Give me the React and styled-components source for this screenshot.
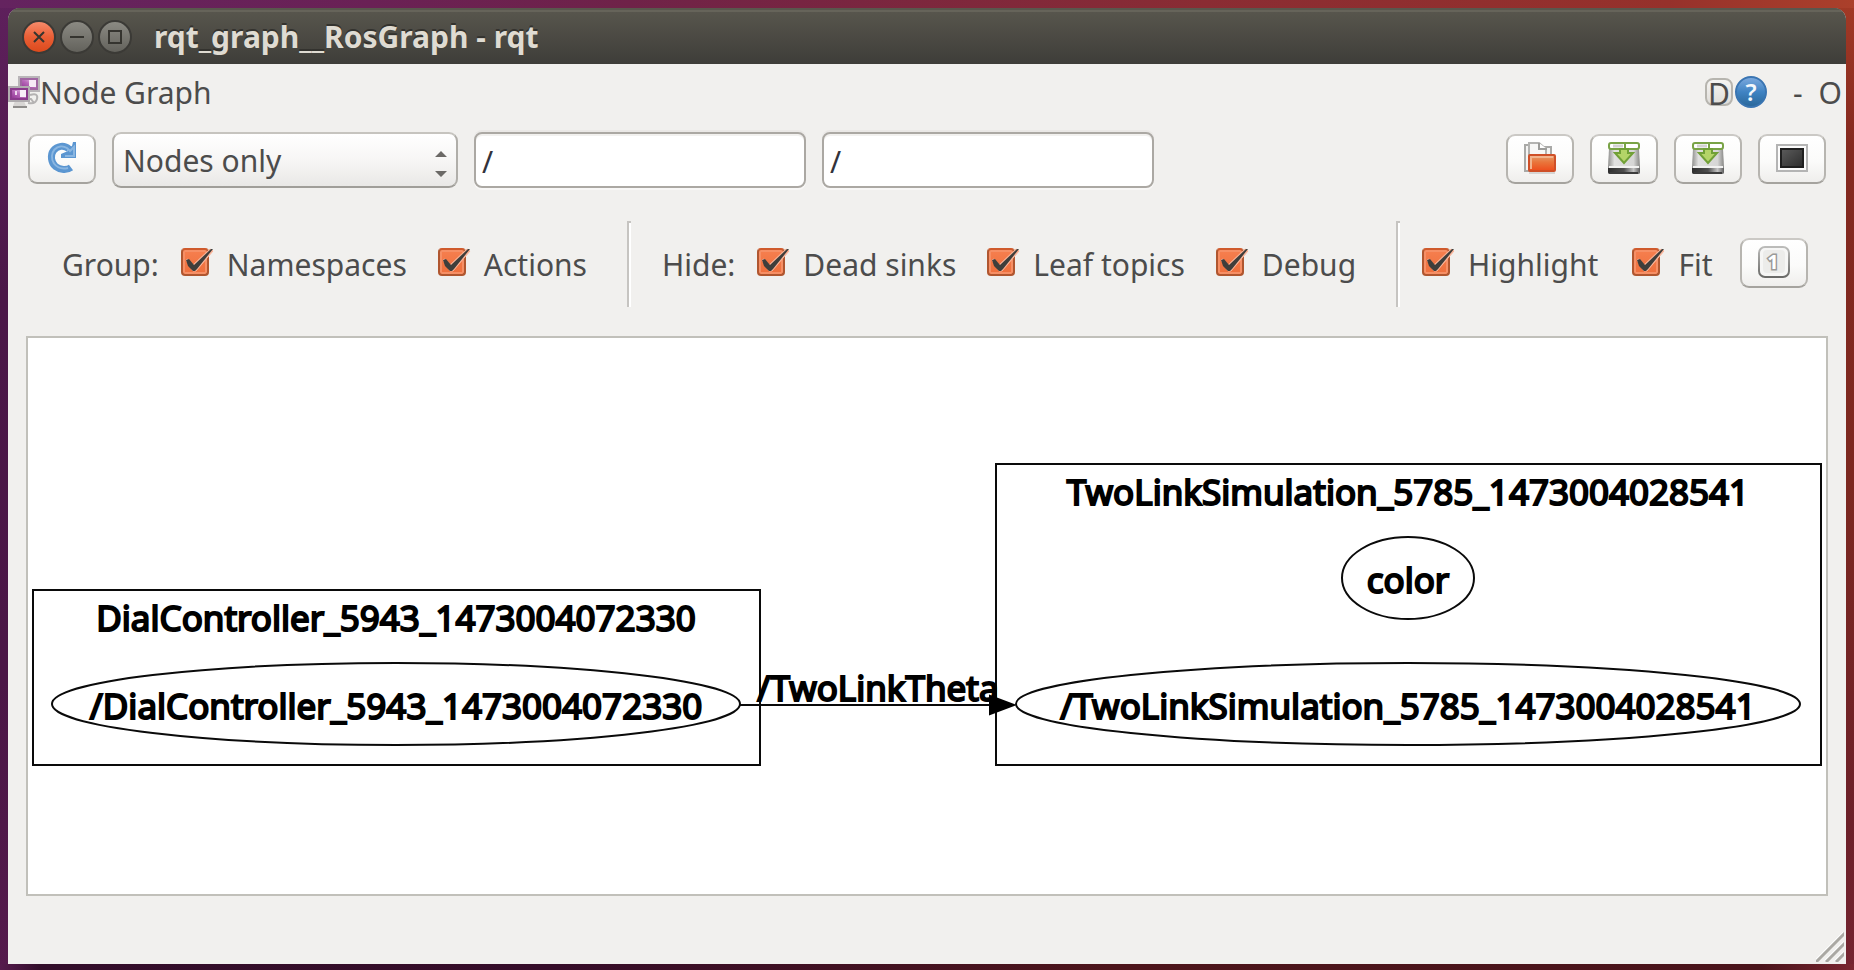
import React, { useState } from "react";
import styled, { createGlobalStyle } from "styled-components";

const GlobalStyle = createGlobalStyle`
  *, *::before, *::after { box-sizing: border-box; }
  body { margin: 0; }
  body, button, input, select {
    font-family: "Noto Sans", "Open Sans", sans-serif;
    font-size: 30px;
    line-height: 40px;
    color: #4c4c4c;
  }
`;

/* ---------- desktop and window frame ---------- */

const Desktop = styled.div`
  display: flex;
  min-height: 100vh;
  padding: 8px 8px 6px;
  background:
    linear-gradient(90deg, #561c4e, #330e2a 40px, #360d29 30%, #4d151b 60%, #4a141b 95%, #7a2630) bottom / 100% 6px no-repeat,
    linear-gradient(90deg, #64235f, #6a2155 20%, #6f2248 34%, #8a2c33 65%, #96312b 90%, #ab402b) top / 100% 8px no-repeat,
    linear-gradient(#5e205c, #4b1748 30%, #4b1646 70%, #551a4c) left / 50% 100% no-repeat,
    linear-gradient(#a33a26, #84291f 15%, #7c2820 50%, #6c2029 85%, #742430) right / 50% 100% no-repeat;
`;

const Window = styled.div`
  display: flex;
  flex: 1;
  flex-direction: column;
  min-width: 0;
  overflow: hidden;
  border-radius: 12px 12px 0 0;
  background: #f1f0ee;
`;

const TitleBar = styled.header`
  display: flex;
  align-items: center;
  gap: 4px;
  height: 56px;
  padding: 2px 14px 0;
  background: linear-gradient(#59574e, #3e3d39);
  box-shadow: inset 0 2px 0 #59574d, inset 0 4px 0 #66645a;
`;

const FrameButton = styled.button`
  display: grid;
  place-items: center;
  width: 34px;
  height: 34px;
  padding: 0;
  border: 2px solid #3b3a36;
  border-radius: 50%;
  background: ${(p) =>
    p.$close ? "linear-gradient(#f58a6a, #ea5f36 50%, #dc4a1c)" : "linear-gradient(#8b8a83, #63625c)"};
`;

const WindowTitle = styled.h1`
  margin: 0 0 0 18px;
  color: #dfdbd2;
  font-size: 30px;
  font-weight: 700;
  line-height: 40px;
  text-shadow: 0 -2px 0 #33322e;
`;

/* ---------- dock title ---------- */

const DockBar = styled.div`
  display: flex;
  align-items: center;
  height: 56px;
  padding-right: 2px;
`;

const DockTitle = styled.h2`
  flex: 1;
  margin: 0;
  padding-top: 2px;
  font-size: 30px;
  font-weight: 400;
  line-height: 40px;
`;

const KeyButton = styled.button`
  display: grid;
  place-items: center;
  width: 28px;
  height: 28px;
  margin-right: 2px;
  padding: 2px 0 0;
  border: 2px solid #b7b5af;
  border-radius: 8px;
  background: linear-gradient(#f6f5f3, #dfddd9);
  line-height: 24px;
`;

const HelpButton = styled.button`
  display: grid;
  margin-right: 24px;
  padding: 0;
  border: 0;
  background: none;
`;

const FlatButton = styled.button`
  padding: 2px 2px 0;
  border: 0;
  background: none;

  & + & { margin-left: 12px; }
`;

/* ---------- tool bars ---------- */

const Main = styled.main`
  display: flex;
  flex: 1;
  flex-direction: column;
  padding: 12px 18px 0;
`;

const Toolbar = styled.div`
  display: flex;
  align-items: center;
  gap: 16px;
  padding: 0 2px;
`;

const ToolButton = styled.button`
  display: grid;
  flex: none;
  place-items: center;
  width: 68px;
  height: 50px;
  margin: 0 0 2px;
  padding: 0 0 2px;
  border: 2px solid;
  border-color: #cbc9c5 #b7b5b0 #a5a39e;
  border-radius: 9px;
  background: linear-gradient(#ffffff, #fbfbfa 55%, #efeeec);
`;

const Combo = styled.div`
  position: relative;
  flex: 0 1 346px;
`;

const ComboSelect = styled.select`
  width: 100%;
  height: 56px;
  padding: 2px 40px 0 9px;
  appearance: none;
  border: 2px solid;
  border-color: #c6c4bf #b0aea9 #a09e99;
  border-radius: 9px;
  background: linear-gradient(#ffffff, #f7f6f5 50%, #e9e8e6);
`;

const ComboArrows = styled.svg`
  position: absolute;
  top: 19px;
  right: 10px;
  pointer-events: none;
`;

const Field = styled.input`
  flex: 0 1 332px;
  min-width: 0;
  height: 56px;
  padding: 2px 6px 0;
  border: 2px solid #aba8a3;
  border-radius: 8px;
  background: #ffffff;
  box-shadow: 0 2px 0 #f8f7f6, 0 -2px 0 #eae8e6, inset 0 2px 0 #f2f1ef;
  color: #33333b;
`;

const Spacer = styled.div`
  flex: 1;
`;

const Options = styled.div`
  display: flex;
  align-items: center;
  height: 86px;
  margin: 33px 0 29px;
  padding-left: 36px;
`;

const OptionGroup = styled.div`
  display: flex;
  align-items: center;
  gap: ${(p) => p.$gap || 31}px;
`;

const GroupName = styled.span`
  margin-right: 22px;
  padding-top: 2px;
`;

const Divider = styled.div`
  align-self: stretch;
  flex: none;
  width: 4px;
  margin: 0 ${(p) => p.$after}px 0 40px;
  border: 0 solid #c6c4c1;
  border-width: 2px 0 0 2px;
  background: #ffffff;
`;

const Option = styled.label`
  display: flex;
  align-items: center;
  gap: 12px;
  padding-top: 2px;
  white-space: nowrap;
`;

const TickBox = styled.span`
  display: grid;
  width: 34px;
  height: 32px;
  margin-bottom: 6px;

  & > * { grid-area: 1 / 1; }
`;

const TickInput = styled.input`
  width: 28px;
  height: 28px;
  margin: 2px 0 0;
  appearance: none;
  border: 2px solid #b0562f;
  border-top-color: #cf5a2c;
  border-radius: 4px;
  background: linear-gradient(#f67f4f, #ee6f3c);
  box-shadow: inset 0 0 0 2px #f68f65;

  &:not(:checked) {
    border-color: #b7b5b0;
    background: #ffffff;
    box-shadow: none;
  }
  &:not(:checked) + svg { visibility: hidden; }
`;

const Tick = styled.svg`
  pointer-events: none;
`;

const FitButtonSlot = styled.div`
  margin-left: 27px;
`;

/* ---------- graph view ---------- */

const GraphView = styled.section`
  display: grid;
  flex: 1;
  min-height: 240px;
  border: 2px solid #c1c0ba;
  background: #ffffff;
`;

const Graph = styled.svg`
  width: 100%;
  height: 100%;
  overflow: hidden;
`;

const Outline = styled.g`
  fill: none;
  stroke: #0a0a0a;
  stroke-width: 2px;
`;

const GraphLabel = styled.text`
  fill: #000000;
  stroke: #000000;
  stroke-width: 2px;
  font-size: 35px;
  text-anchor: middle;
`;

const StatusBar = styled.footer`
  display: flex;
  align-items: flex-end;
  justify-content: flex-end;
  height: 68px;
  padding: 0 2px 2px 0;
`;

/* ---------- icons ---------- */

const NodesIcon = () => (
  <svg width="32" height="34" viewBox="0 0 32 34" aria-hidden="true">
    <defs>
      <linearGradient id="screen" x1="0" y1="1" x2="1" y2="0">
        <stop offset="0" stopColor="#8d2f8f" />
        <stop offset="0.5" stopColor="#b869ba" />
        <stop offset="1" stopColor="#f3e2f3" />
      </linearGradient>
    </defs>
    <path d="M22 20c6-2 8 0 7 4s-4 5-9 4M15 24h8l3 4" fill="none" stroke="#b4b2b2" strokeWidth="2" />
    <path d="M7 26h9l2 5H5z" fill="#d8d6d4" />
    <path d="M5 32h14" stroke="#8f8d8b" strokeWidth="2" />
    <rect x="11" y="2" width="20" height="14" fill="#cfc0cf" stroke="#b9b5b8" strokeWidth="2" />
    <rect x="13" y="4" width="16" height="10" fill="url(#screen)" stroke="#a066a2" strokeWidth="2" />
    <rect x="21" y="5" width="7" height="7" fill="#f6e9f6" />
    <rect x="1" y="12" width="20" height="14" fill="#d4c6d4" stroke="#b0acaf" strokeWidth="2" />
    <rect x="3" y="14" width="16" height="10" fill="url(#screen)" stroke="#8a3b8c" strokeWidth="2" />
    <rect x="12" y="15" width="6" height="7" fill="#f8eef8" />
    <rect x="7" y="16" width="2" height="4" fill="#f0d8f0" />
  </svg>
);

const RefreshIcon = () => (
  <svg width="32" height="32" viewBox="0 0 32 32" aria-hidden="true">
    <path
      d="M25 25.500C21 28.500 14 28 9.500 24.500C5 20.500 4 13 7.500 8.500C11 4 18 2.500 23 7"
      fill="none"
      stroke="#5b96d1"
      strokeWidth="7"
    />
    <path d="M30 0v16H15v-4l7-3-1-3 5-2 1-4z" fill="#5b96d1" />
    <path
      d="M22 26C16 27.500 11 25.500 8 21.500C5 16.500 5.500 11 8.500 7.500C12 4 17 3.500 21 6l3 3 4-4v9h-9"
      fill="none"
      stroke="#8ab6e1"
      strokeWidth="2"
    />
  </svg>
);

const FolderIcon = () => (
  <svg width="32" height="32" viewBox="0 0 32 32" aria-hidden="true">
    <defs>
      <linearGradient id="folder" x1="0" y1="0" x2="0" y2="1">
        <stop offset="0" stopColor="#e5a070" />
        <stop offset="0.45" stopColor="#e9753b" />
        <stop offset="1" stopColor="#ee4c1c" />
      </linearGradient>
    </defs>
    <path d="M1 3h4v26H1zM17 5h10v9H17z" fill="#f4f4f3" stroke="#a9a9a7" strokeWidth="2" />
    <path d="M5 1h10l7 6v8H5z" fill="#f7f7f6" stroke="#b3b3b1" strokeWidth="2" />
    <path d="M15 1v6h8" fill="#ffffff" stroke="#9c9c9a" strokeWidth="2" />
    <rect x="5" y="13" width="26" height="16" rx="1" fill="url(#folder)" stroke="#cf5028" strokeWidth="2" />
    <path d="M7 27V15h22" fill="none" stroke="#f2b48e" strokeWidth="2" />
    <path d="M5 31h26" stroke="#d7d5d3" strokeWidth="2" />
  </svg>
);

const SaveIcon = () => (
  <svg width="32" height="32" viewBox="0 0 32 32" aria-hidden="true">
    <defs>
      <linearGradient id="drive" x1="0" y1="0" x2="1" y2="0">
        <stop offset="0" stopColor="#8f8f8d" />
        <stop offset="0.2" stopColor="#e0e0df" />
        <stop offset="0.8" stopColor="#d6d6d5" />
        <stop offset="1" stopColor="#878785" />
      </linearGradient>
      <linearGradient id="driveBase" x1="0" y1="0" x2="1" y2="0">
        <stop offset="0" stopColor="#2e2e2e" />
        <stop offset="0.5" stopColor="#4e4e4e" />
        <stop offset="0.8" stopColor="#c4c4c4" />
        <stop offset="1" stopColor="#5b5b5b" />
      </linearGradient>
    </defs>
    <path d="M1 7h30l1 18v5q0 2-2 2H2q-2 0-2-2v-5z" fill="url(#drive)" />
    <path d="M1 24h30v2H1z" fill="#f2f2f1" />
    <path d="M0 26h32v4q0 2-2 2H2q-2 0-2-2z" fill="url(#driveBase)" />
    <path d="M2 31h28" stroke="#3c3c3c" strokeWidth="2" />
    <rect x="1" y="1" width="30" height="6" rx="2" fill="#ffffff" stroke="#79a346" strokeWidth="2" />
    <path d="M5 4h10" stroke="#d3d3d1" strokeWidth="3" />
    <path d="M17 2v5" stroke="#79a346" strokeWidth="2" />
    <path d="M12 7h8v4h5l-9 10-9-10h5z" fill="#b4d468" stroke="#71a037" strokeWidth="2" />
  </svg>
);

const ScreenIcon = () => (
  <svg width="32" height="32" viewBox="0 0 32 32" aria-hidden="true">
    <defs>
      <linearGradient id="dark" x1="0" y1="0" x2="1" y2="1">
        <stop offset="0" stopColor="#5c5c5c" />
        <stop offset="1" stopColor="#2c2c2c" />
      </linearGradient>
    </defs>
    <rect x="1" y="3" width="30" height="26" fill="#fbfbfb" stroke="#b4b4b4" strokeWidth="2" />
    <rect x="5" y="7" width="22" height="18" fill="url(#dark)" stroke="#1f1f1f" strokeWidth="2" />
  </svg>
);

const OneIcon = () => (
  <svg width="32" height="32" viewBox="0 0 32 32" aria-hidden="true">
    <defs>
      <linearGradient id="keyEdge" x1="0" y1="0" x2="0" y2="1">
        <stop offset="0" stopColor="#bcbcba" />
        <stop offset="1" stopColor="#6a6a68" />
      </linearGradient>
    </defs>
    <rect x="1" y="1" width="30" height="30" rx="6" fill="#f6f6f5" stroke="url(#keyEdge)" strokeWidth="2" />
    <rect x="5" y="4" width="22" height="23" rx="4" fill="#ececea" />
    <text x="15" y="23" textAnchor="middle" fontSize="20" fontWeight="700" fill="#ffffff" stroke="#9a9a98" strokeWidth="3" paintOrder="stroke">
      1
    </text>
  </svg>
);

const HelpIcon = () => (
  <svg width="32" height="32" viewBox="0 0 32 32" overflow="visible" aria-hidden="true">
    <defs>
      <linearGradient id="help" x1="0" y1="0" x2="0" y2="1">
        <stop offset="0" stopColor="#7fabdf" />
        <stop offset="0.5" stopColor="#3f83c3" />
        <stop offset="1" stopColor="#2a6799" />
      </linearGradient>
    </defs>
    <circle cx="16" cy="16" r="15" fill="url(#help)" stroke="#3a75b2" strokeWidth="2" />
    <text x="16" y="25" textAnchor="middle" fontSize="24" fontWeight="600" fill="#f4f8fc">
      ?
    </text>
  </svg>
);

const FrameGlyph = ({ d }) => (
  <svg width="18" height="18" viewBox="0 0 18 18" fill="none" stroke="#35342f" strokeWidth="2" aria-hidden="true">
    <path d={d} />
  </svg>
);

const ResizeGrip = () => (
  <svg width="28" height="30" viewBox="0 0 28 30" aria-hidden="true">
    <path d="M-1 29L28 0M9 29L28 10M19 29L28 20" stroke="#ffffff" strokeWidth="2" />
    <path d="M0 30L29 1M10 30L29 11M20 30L29 21" stroke="#aaa8a3" strokeWidth="3" />
  </svg>
);

/* ---------- parts ---------- */

function CheckOption({ children }) {
  const [on, setOn] = useState(true);
  return (
    <Option>
      <TickBox>
        <TickInput type="checkbox" checked={on} onChange={() => setOn(!on)} />
        <Tick width="34" height="32" viewBox="0 0 34 32" aria-hidden="true">
          <path d="M5 14l2-1 5 6L29 3l3 2-17 20h-3z" fill="#f9b59a" stroke="#f9b59a" strokeWidth="1" />
          <path d="M5 14l3-1 5 6L30 3h2L16 23l-2 2h-2l-5-5z" fill="#3f3e3b" />
        </Tick>
      </TickBox>
      {children}
    </Option>
  );
}

export default function App() {
  return (
    <>
      <GlobalStyle />
      <Desktop>
        <Window>
          <TitleBar>
            <FrameButton $close aria-label="Close">
              <FrameGlyph d="M4 4l10 10M14 4L4 14" />
            </FrameButton>
            <FrameButton aria-label="Minimize">
              <FrameGlyph d="M2 9h14" />
            </FrameButton>
            <FrameButton aria-label="Maximize">
              <FrameGlyph d="M3 3h12v12H3z" />
            </FrameButton>
            <WindowTitle>rqt_graph__RosGraph - rqt</WindowTitle>
          </TitleBar>

          <DockBar>
            <NodesIcon />
            <DockTitle>Node Graph</DockTitle>
            <KeyButton>D</KeyButton>
            <HelpButton aria-label="Help">
              <HelpIcon />
            </HelpButton>
            <FlatButton>-</FlatButton>
            <FlatButton>O</FlatButton>
          </DockBar>

          <Main>
            <Toolbar>
              <ToolButton aria-label="Refresh">
                <RefreshIcon />
              </ToolButton>
              <Combo>
                <ComboSelect aria-label="Graph type" defaultValue="nodes">
                  <option value="nodes">Nodes only</option>
                </ComboSelect>
                <ComboArrows width="14" height="26" viewBox="0 0 14 26" fill="#6b6966" aria-hidden="true">
                  <path d="M7 0l6 6H1zM7 26l6-6H1z" />
                </ComboArrows>
              </Combo>
              <Field aria-label="Node filter" defaultValue="/" />
              <Field aria-label="Topic filter" defaultValue="/" />
              <Spacer />
              <ToolButton aria-label="Load graph">
                <FolderIcon />
              </ToolButton>
              <ToolButton aria-label="Save as DOT">
                <SaveIcon />
              </ToolButton>
              <ToolButton aria-label="Save as SVG">
                <SaveIcon />
              </ToolButton>
              <ToolButton aria-label="Save as image">
                <ScreenIcon />
              </ToolButton>
            </Toolbar>

            <Options>
              <GroupName>Group:</GroupName>
              <OptionGroup>
                <CheckOption>Namespaces</CheckOption>
                <CheckOption>Actions</CheckOption>
              </OptionGroup>
              <Divider $after={31} />
              <GroupName>Hide:</GroupName>
              <OptionGroup>
                <CheckOption>Dead sinks</CheckOption>
                <CheckOption>Leaf topics</CheckOption>
                <CheckOption>Debug</CheckOption>
              </OptionGroup>
              <Divider $after={22} />
              <OptionGroup $gap={34}>
                <CheckOption>Highlight</CheckOption>
                <CheckOption>Fit</CheckOption>
              </OptionGroup>
              <FitButtonSlot>
                <ToolButton aria-label="Fit in view">
                  <OneIcon />
                </ToolButton>
              </FitButtonSlot>
            </Options>

            <GraphView>
              <Graph viewBox="0 0 1798 556" role="img" aria-label="Node graph">
                <Outline>
                  <rect x="5" y="252" width="727" height="175" />
                  <rect x="968" y="126" width="825" height="301" />
                  <ellipse cx="368" cy="366" rx="344" ry="41" />
                  <ellipse cx="1380" cy="240" rx="66" ry="41" />
                  <ellipse cx="1380" cy="366" rx="392" ry="41" />
                  <path d="M712 367H970" />
                </Outline>
                <path d="M962 358l24 9-24 9z" fill="#000000" stroke="#000000" strokeWidth="2" />
                <GraphLabel x="368" y="293">DialController_5943_1473004072330</GraphLabel>
                <GraphLabel x="368" y="381">/DialController_5943_1473004072330</GraphLabel>
                <GraphLabel x="850" y="363">/TwoLinkTheta</GraphLabel>
                <GraphLabel x="1380" y="167">TwoLinkSimulation_5785_1473004028541</GraphLabel>
                <GraphLabel x="1380" y="255">color</GraphLabel>
                <GraphLabel x="1380" y="381">/TwoLinkSimulation_5785_1473004028541</GraphLabel>
              </Graph>
            </GraphView>
          </Main>

          <StatusBar>
            <ResizeGrip />
          </StatusBar>
        </Window>
      </Desktop>
    </>
  );
}
